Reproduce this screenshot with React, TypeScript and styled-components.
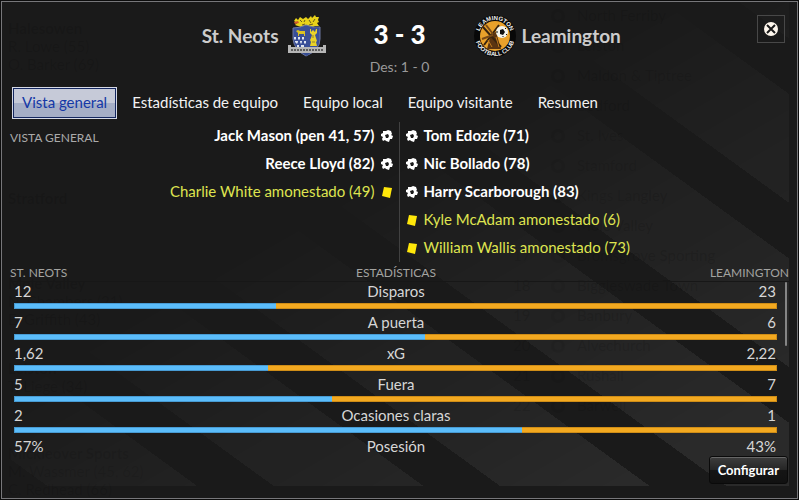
import React from "react";
import styled, { createGlobalStyle, css } from "styled-components";

const GlobalStyle = createGlobalStyle`
  * { box-sizing: border-box; }
  html, body { margin: 0; background: #0c0c0c; }
  body, button { font-family: Lato, "Liberation Sans", sans-serif; }
`;

const Page = styled.div`
  display: flex;
  min-height: 100vh;
  padding: 1px;
  overflow: hidden;
  color: #d6d6d6;
  font-size: 15px;
  line-height: 20px;
`;

const Window = styled.main`
  position: relative;
  flex: 1;
  min-width: 0;
  display: flex;
  flex-direction: column;
  border: 1px solid #77777a;
  background: #1a1a1a;
  padding: 0 8px 14px;
`;

const Stripes = styled.div`
  position: absolute;
  inset: 0 8px 12px;
  background: repeating-linear-gradient(
    36deg,
    transparent 0 22px,
    rgba(255, 255, 255, 0.07) 22px 110px,
    transparent 110px 133px
  );
  mask-image: linear-gradient(150deg, transparent 38%, #000 90%);
`;

const Backdrop = styled.div`
  position: absolute;
  inset: 0;
  display: flex;
  justify-content: space-between;
  color: rgba(0, 0, 0, 0.1);
  font-size: 15px;
  line-height: 18px;
`;

const ResultList = styled.div`
  display: flex;
  flex-direction: column;
  padding: 17px 6px 0;
`;

const Result = styled.div`
  height: 85px;

  &:last-child {
    height: auto;
  }
`;

const ResultTeam = styled.div`
  min-height: 18px;
  font-weight: 700;
`;

const Standings = styled.div`
  display: grid;
  grid-template-columns: 38px 26px 220px;
  grid-auto-rows: 30px;
  line-height: 26px;
`;

const StandingBadge = styled.span`
  width: 14px;
  height: 14px;
  margin-top: 7px;
  border: 3px solid rgba(0, 0, 0, 0.06);
  border-radius: 50%;
`;

const Content = styled.div`
  position: relative;
  flex: 1;
  display: flex;
  flex-direction: column;
`;

const Header = styled.header`
  display: grid;
  grid-template-columns: 1fr 148px 1fr;
  height: 85px;
  padding-top: 12px;
`;

const Team = styled.div<{ $away?: boolean }>`
  display: flex;
  align-items: center;
  justify-content: ${(p) => (p.$away ? "flex-start" : "flex-end")};
  gap: ${(p) => (p.$away ? 6 : 9)}px;
  height: 44px;
  color: #cccccc;
  font-size: 19px;
  font-weight: 700;
`;

const Score = styled.div`
  text-align: center;
`;

const ScoreValue = styled.div`
  color: #fff;
  font-size: 26px;
  font-weight: 900;
  line-height: 40px;
`;

const HalfTime = styled.div`
  margin-top: 3px;
  color: #999;
  font-size: 14px;
`;

const CloseButton = styled.button`
  display: flex;
  align-items: center;
  justify-content: center;
  width: 28px;
  height: 28px;
  margin: 1px 4px 0 auto;
  align-self: flex-start;
  padding: 0;
  border: 1px solid #484848;
  background: transparent;
`;

const Tabs = styled.nav`
  display: flex;
  gap: 5px;
  padding-left: 2px;
`;

const Tab = styled.button<{ $active?: boolean }>`
  height: 32px;
  padding: 0 9px 2px;
  border: 1px solid transparent;
  background: transparent;
  color: #f2f2f2;
  font-size: 15px;
  ${(p) =>
    p.$active &&
    css`
      border-color: #d5d9e6;
      background: linear-gradient(#c6cad8 0 50%, #a5aec6 50% 100%);
      box-shadow: inset 0 0 0 1px #14275f;
      color: #1438a6;
    `}
`;

const Overview = styled.section`
  display: grid;
  grid-template-columns: 1fr 1fr;
  min-height: 140px;
  margin-top: 3px;
`;

const Side = styled.div<{ $away?: boolean }>`
  display: flex;
  justify-content: space-between;
  ${(p) => !p.$away && "border-right: 1px solid #414141;"}
`;

const Caption = styled.h2`
  margin: 6px 0 0;
  color: #aaaaaa;
  font-size: 12px;
  font-weight: 400;
`;

const Events = styled.ul`
  margin: 0;
  padding: 0 6px;
  list-style: none;
`;

const Event = styled.li<{ $away?: boolean; $card?: boolean }>`
  display: flex;
  flex-direction: ${(p) => (p.$away ? "row" : "row-reverse")};
  align-items: center;
  gap: 6px;
  height: 28px;
  color: ${(p) => (p.$card ? "#dfe450" : "#fff")};
  font-weight: ${(p) => (p.$card ? 400 : 700)};
`;

const EventText = styled.span`
  padding-bottom: 2px;
`;

const StatsArea = styled.section`
  position: relative;
`;

const StatsTable = styled.table`
  width: 100%;
  border-collapse: separate;
  border-spacing: 0;
  table-layout: fixed;
`;

const HeadCell = styled.th<{ $align: string }>`
  height: 20px;
  padding: ${(p) => (p.$align === "center" ? "2px 7px 0 0" : "2px 0 0")};
  border-bottom: 1px solid #171717;
  color: #a3a3a0;
  font-size: 12px;
  font-weight: 400;
  line-height: 17px;
  text-align: ${(p) => p.$align};
`;

const StatCell = styled.td<{ $align: string }>`
  height: 21px;
  padding: ${(p) =>
    p.$align === "left" ? "0 0 3px 4px" : p.$align === "right" ? "0 13px 3px 0" : "0 7px 3px 0"};
  line-height: 18px;
  text-align: ${(p) => p.$align};
`;

const BarCell = styled.td`
  height: 10px;
  padding: 0 12px 4px 4px;
`;

const Bar = styled.div`
  display: flex;
  height: 6px;
`;

const BarPart = styled.span<{ $away?: boolean }>`
  background: ${(p) => (p.$away ? "#f3a920" : "#5bbdfb")};
  border: solid ${(p) => (p.$away ? "#cf8d17" : "#489bd3")};
  border-width: ${(p) => (p.$away ? "1px 1px 1px 0" : "1px 0 1px 1px")};
`;

const ScrollThumb = styled.span`
  position: absolute;
  top: 20px;
  right: 2px;
  width: 2px;
  height: 64px;
  border-radius: 1px;
  background: #858585;
`;

const Footer = styled.footer`
  position: relative;
  display: flex;
  justify-content: flex-end;
  margin-top: -2px;
`;

const ConfigButton = styled.button`
  height: 28px;
  padding: 0 8px 1px;
  margin-right: 1px;
  border: 1px solid #0a0a0a;
  border-radius: 3px;
  background: linear-gradient(#3d3d3d, #252525 50%, #151515 50%, #111);
  box-shadow: inset 0 1px 0 #666;
  color: #fff;
  font-size: 13px;
  font-weight: 700;
`;

const HomeCrest = () => (
  <svg width="38" height="42" viewBox="0 0 38 42" role="img" aria-label="St. Neots">
    <path
      d="M6 6L8 3 10 5 12 2 15 4 18 2 20 4 23 1 24 3 27 0 28 2 31 2 30 5 31 7 29 8 31 11 27 11 25 12H13L10 11 7 10 9 8Z"
      fill="#e8d21a"
    />
    <path d="M12 5l2 2M17 5l-1 2M21 5l2 3M27 4l-2 3M14 10l3-1M21 10l4-1" stroke="#6a591a" strokeWidth="1" />
    <path d="M6 7l4-1 1 2-4 1z" fill="#cf5a2b" />
    <path d="M5 13Q12 13 18 10Q25 13 32 12V24Q32 35 18 41Q6 35 5 24Z" fill="#3a4f98" stroke="#6c769f" />
    <path d="M8 16l2-1 2 1h5v5h-1v-2h-5v2h-1v-3z" fill="#dcc222" />
    <g fill="#dfe4ef">
      <path d="M6 22h2v2l-1 1-1-1zM10 22h2v2l-1 1-1-1zM14 22h2v2l-1 1-1-1zM7 26h3v1l-1 2-2-2zM12 26h2v1l-1 2-1-2zM16 26h2v2l-1 1-1-1z" />
      <path d="M9 30h2v2H9zM13 30h3v2h-3z" />
    </g>
    <path
      d="M22 14h1v3l2-2 2 2 1-3h1v4l-2 2 1 3 1 3-1 1 1 4H22l1-4-1-2 1-2 1-3-2-2z"
      fill="#ead229"
    />
    <path d="M25 20v3M24 27h3" stroke="#8f8230" strokeWidth="1" />
    <path d="M0 30h3v2h32v-2h3v8H0z" fill="#b6b6b6" />
    <path d="M3 35h32" stroke="#5d5d5d" strokeWidth="2" strokeDasharray="2 1" />
    <path d="M15 38h7l-3 3z" fill="#344b91" />
  </svg>
);

const AwayCrest = () => (
  <svg width="42" height="42" viewBox="0 0 42 42" role="img" aria-label="Leamington">
    <defs>
      <path id="crest-top" d="M5 21a16 16 0 0 1 32 0" />
      <path id="crest-bottom" d="M1 21a20 20 0 0 0 40 0" />
    </defs>
    <circle cx="21" cy="21" r="21" fill="#080808" />
    <circle cx="21" cy="21" r="15" fill="#e9a12b" />
    <path d="M17 19l5-2 5 17H13z" fill="#5b3411" />
    <path d="M9 12l18 20M10 30L25 10" stroke="#38230f" strokeWidth="2" />
    <path d="M12 10l7 9M8 24l11-4" stroke="#7a4a17" strokeWidth="2" />
    <path d="M14 25l4 7M22 22l3 10" stroke="#c27a1c" strokeWidth="1" />
    <circle cx="28" cy="17" r="6" fill="#f4f4ee" />
    <path d="M26 15l3-1 2 3-2 3-3-1z" fill="#111" />
    <path d="M22 17h2M32 13l-1 1M29 22v-1M33 20l-1-1" stroke="#111" />
    <g fill="#f0f0f0" fontFamily="Liberation Sans, sans-serif" fontWeight="700" fontSize="6">
      <text textAnchor="middle">
        <textPath href="#crest-top" startOffset="50%">LEAMINGTON</textPath>
      </text>
      <text textAnchor="middle">
        <textPath href="#crest-bottom" startOffset="50%">FOOTBALL CLUB</textPath>
      </text>
    </g>
  </svg>
);

const BallIcon = () => (
  <svg width="12" height="12" viewBox="0 0 12 12" role="img" aria-label="Gol">
    <path
      d="M2 1L5 1 7 0 10 1 11 4 10 5 12 6 11 9 9 9 8 12 5 11 4 10 2 11 1 9 2 7 0 6 0 4 2 3Z"
      fill="#fff"
    />
    <path d="M4 5L7 4 8 6 7 8 5 8Z" fill="#1a1a1a" />
  </svg>
);

const CardIcon = () => (
  <svg width="12" height="12" viewBox="0 0 12 12" role="img" aria-label="Tarjeta amarilla">
    <path d="M3 1L11 2 9 12 1 10Z" fill="#ffe70a" />
  </svg>
);

const CloseIcon = () => (
  <svg width="14" height="14" viewBox="0 0 14 14" aria-hidden="true">
    <circle cx="7" cy="7" r="7" fill="#fff8ee" />
    <path d="M3 3l8 8M11 3l-8 8" stroke="#1a1a1a" strokeWidth="2" />
  </svg>
);

type MatchEvent = { text: string; card?: boolean };

const homeEvents: MatchEvent[] = [
  { text: "Jack Mason (pen 41, 57)" },
  { text: "Reece Lloyd (82)" },
  { text: "Charlie White amonestado (49)", card: true },
];

const awayEvents: MatchEvent[] = [
  { text: "Tom Edozie (71)" },
  { text: "Nic Bollado (78)" },
  { text: "Harry Scarborough (83)" },
  { text: "Kyle McAdam amonestado (6)", card: true },
  { text: "William Wallis amonestado (73)", card: true },
];

const stats = [
  { label: "Disparos", home: "12", away: "23", share: [12, 23] },
  { label: "A puerta", home: "7", away: "6", share: [7, 6] },
  { label: "xG", home: "1,62", away: "2,22", share: [128, 257] },
  { label: "Fuera", home: "5", away: "7", share: [5, 7] },
  { label: "Ocasiones claras", home: "2", away: "1", share: [2, 1] },
  { label: "Posesión", home: "57%", away: "43%" },
];

const results = [
  ["Halesowen", "R. Lowe (55)", "O. Barker (69)"],
  [""],
  ["Stratford"],
  ["Mole Valley", "N. Chambers (21)", "E. Griffith (43)"],
  ["Leiston", "T. Liege (34)"],
  ["Mickleover Sports", "M. Wassmer (45, 62)", "C. Redhead (66)"],
];

const standings: { name: string; rank?: number }[] = [
  { name: "North Ferriby" },
  { name: "Leiston" },
  { name: "Maldon & Tiptree" },
  { name: "Bedford" },
  { name: "St. Ives" },
  { name: "Stamford" },
  { name: "Kings Langley" },
  { name: "Mole Valley" },
  { name: "Bromsgrove Sporting", rank: 17 },
  { name: "Biggleswade Town", rank: 18 },
  { name: "Banbury", rank: 19 },
  { name: "Alvechurch", rank: 20 },
  { name: "Rushall", rank: 21 },
  { name: "Barwell", rank: 22 },
];

const tabs = ["Vista general", "Estadísticas de equipo", "Equipo local", "Equipo visitante", "Resumen"];

const EventList = ({ items, away }: { items: MatchEvent[]; away?: boolean }) => (
  <Events>
    {items.map((e) => (
      <Event key={e.text} $away={away} $card={e.card}>
        {e.card ? <CardIcon /> : <BallIcon />}
        <EventText>{e.text}</EventText>
      </Event>
    ))}
  </Events>
);

export default function App() {
  const [active, setActive] = React.useState(tabs[0]);
  return (
    <Page>
      <GlobalStyle />
      <Window>
        <Stripes />
        <Backdrop aria-hidden="true">
          <ResultList>
            {results.map(([team, ...scorers], i) => (
              <Result key={i}>
                <ResultTeam>{team}</ResultTeam>
                {scorers.map((s) => (
                  <div key={s}>{s}</div>
                ))}
              </Result>
            ))}
          </ResultList>
          <Standings>
            {standings.map(({ name, rank }) => (
              <React.Fragment key={name}>
                <span>{rank}</span>
                <StandingBadge />
                <span>{name}</span>
              </React.Fragment>
            ))}
          </Standings>
        </Backdrop>
        <Content>
          <Header>
            <Team>
              <span>St. Neots</span>
              <HomeCrest />
            </Team>
            <Score>
              <ScoreValue>3 - 3</ScoreValue>
              <HalfTime>Des: 1 - 0</HalfTime>
            </Score>
            <Team $away>
              <AwayCrest />
              <span>Leamington</span>
              <CloseButton aria-label="Cerrar">
                <CloseIcon />
              </CloseButton>
            </Team>
          </Header>
          <Tabs>
            {tabs.map((t) => (
              <Tab key={t} $active={t === active} onClick={() => setActive(t)}>
                {t}
              </Tab>
            ))}
          </Tabs>
          <Overview>
            <Side>
              <Caption>VISTA GENERAL</Caption>
              <EventList items={homeEvents} />
            </Side>
            <Side $away>
              <EventList items={awayEvents} away />
            </Side>
          </Overview>
          <StatsArea>
            <StatsTable>
              <thead>
                <tr>
                  <HeadCell $align="left">ST. NEOTS</HeadCell>
                  <HeadCell $align="center">ESTADÍSTICAS</HeadCell>
                  <HeadCell $align="right">LEAMINGTON</HeadCell>
                </tr>
              </thead>
              <tbody>
                {stats.map((s) => (
                  <React.Fragment key={s.label}>
                    <tr>
                      <StatCell $align="left">{s.home}</StatCell>
                      <StatCell $align="center">{s.label}</StatCell>
                      <StatCell $align="right">{s.away}</StatCell>
                    </tr>
                    {s.share && (
                      <tr>
                        <BarCell colSpan={3}>
                          <Bar>
                            <BarPart style={{ flexGrow: s.share[0] }} />
                            <BarPart $away style={{ flexGrow: s.share[1] }} />
                          </Bar>
                        </BarCell>
                      </tr>
                    )}
                  </React.Fragment>
                ))}
              </tbody>
            </StatsTable>
            <ScrollThumb />
          </StatsArea>
          <Footer>
            <ConfigButton>Configurar</ConfigButton>
          </Footer>
        </Content>
      </Window>
    </Page>
  );
}
